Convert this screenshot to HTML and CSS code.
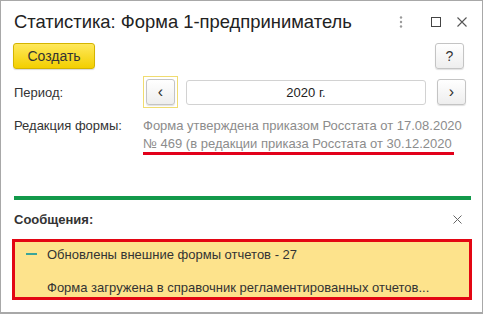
FILE: index.html
```html
<!DOCTYPE html>
<html>
<head>
    <meta charset="UTF-8">
    <title>Статистика: Форма 1-предприниматель</title>
    <link rel="stylesheet" href="styles.css">
</head>
<body>
    <div class="window">
        <div class="title-bar">
            <h1>Статистика: Форма 1-предприниматель</h1>
            <div class="window-tools">
                <span class="tool-dots">
                    <svg width="4" height="12" viewBox="0 0 4 12"><circle cx="2" cy="1.5" r="1.2" fill="#9a9a9a"/><circle cx="2" cy="6" r="1.2" fill="#9a9a9a"/><circle cx="2" cy="10.5" r="1.2" fill="#9a9a9a"/></svg>
                </span>
                <span class="tool-max">
                    <svg width="10" height="10" viewBox="0 0 10 10"><rect x="0.5" y="0.5" width="9" height="9" fill="none" stroke="#444" stroke-width="1"/></svg>
                </span>
                <span class="tool-close">
                    <svg width="10" height="10" viewBox="0 0 10 10"><path d="M0.5 0.5 L9.5 9.5 M9.5 0.5 L0.5 9.5" stroke="#555" stroke-width="1.1"/></svg>
                </span>
            </div>
        </div>

        <div class="toolbar">
            <button class="yellow-button">Создать</button>
            <button class="gray-button help-button">?</button>
        </div>

        <div class="form-row period-row">
            <div class="label">Период:</div>
            <div class="period-field">
                <span class="focus-frame"><button class="gray-button arrow-button">&lsaquo;</button></span>
                <div class="year-input">2020 г.</div>
                <button class="gray-button arrow-button">&rsaquo;</button>
            </div>
        </div>

        <div class="form-row edition-row">
            <div class="label">Редакция формы:</div>
            <div class="edition-text">
                Форма утверждена приказом Росстата от 17.08.2020<br>
                <span class="marked">№ 469 (в редакции приказа Росстата от 30.12.2020</span>
            </div>
        </div>

        <div class="green-line"></div>

        <div class="messages-head">
            <span class="messages-title">Сообщения:</span>
            <span class="messages-close">
                <svg width="9" height="9" viewBox="0 0 9 9"><path d="M0.5 0.5 L8.5 8.5 M8.5 0.5 L0.5 8.5" stroke="#666" stroke-width="1"/></svg>
            </span>
        </div>

        <div class="messages-box">
            <div class="message-line">
                <span class="message-dash"></span>
                <span>Обновлены внешние формы отчетов - 27</span>
            </div>
            <div class="message-line">
                <span class="message-dash empty"></span>
                <span>Форма загружена в справочник регламентированных отчетов...</span>
            </div>
        </div>
    </div>
</body>
</html>
```

FILE: styles.css
```css
body {
    margin: 0;
    background-color: #ffffff;
    font-family: "Liberation Sans", Arial, sans-serif;
    color: #333333;
}

.window {
    width: 483px;
    height: 314px;
    box-sizing: border-box;
    border: 1px solid #a8a8a8;
    border-bottom-width: 2px;
    background-color: #ffffff;
    padding: 0 12px;
}

.title-bar {
    display: flex;
    align-items: center;
    justify-content: space-between;
    height: 42px;
    padding-left: 1px;
}

h1 {
    margin: 0;
    font-size: 18.4px;
    font-weight: normal;
    color: #222222;
}

.window-tools {
    display: flex;
    align-items: center;
    padding-right: 3px;
}

.window-tools span {
    display: flex;
}

.tool-dots {
    margin-right: 28px;
}

.tool-max {
    margin-right: 16px;
}

.toolbar {
    display: flex;
    justify-content: space-between;
    align-items: center;
    padding-right: 6px;
}

button {
    font-family: "Liberation Sans", Arial, sans-serif;
    cursor: pointer;
}

.yellow-button {
    width: 82px;
    height: 26px;
    font-size: 14px;
    color: #333333;
    border: 1px solid #d4b400;
    border-radius: 3px;
    background: linear-gradient(#ffe85c, #f3cf00);
    box-shadow: 0 1px 1px rgba(0, 0, 0, 0.15);
}

.gray-button {
    height: 26px;
    width: 29px;
    padding: 0;
    font-size: 14px;
    color: #333333;
    border: 1px solid #c4c4c4;
    border-radius: 3px;
    background: linear-gradient(#ffffff, #eeeeee);
    box-shadow: 0 1px 1px rgba(0, 0, 0, 0.12);
}

.form-row {
    display: flex;
    align-items: flex-start;
    font-size: 13px;
}

.label {
    width: 129px;
    padding-left: 1px;
    color: #333333;
}

.period-row {
    margin-top: 7px;
    align-items: center;
}

.period-field {
    display: flex;
    align-items: center;
    gap: 8px;
}

.focus-frame {
    display: flex;
    padding: 2px;
    border: 1px solid #f0dc70;
}

.arrow-button {
    font-size: 16px;
    line-height: 20px;
}

.year-input {
    width: 238px;
    height: 23px;
    line-height: 23px;
    border: 1px solid #d2d2d2;
    border-radius: 3px;
    text-align: center;
    font-size: 13px;
    color: #222222;
    margin-right: 3px;
}

.edition-row {
    margin-top: 9px;
}

.edition-row .label {
    line-height: 18px;
}

.edition-text {
    color: #8c8c8c;
    line-height: 18px;
}

.marked {
    display: inline-block;
    border-bottom: 3px solid #e2001a;
    padding-right: 2px;
    line-height: 16px;
}

.green-line {
    height: 4px;
    margin-top: 41px;
    margin-left: 1px;
    width: 457px;
    background-color: #12994a;
}

.messages-head {
    display: flex;
    justify-content: space-between;
    align-items: center;
    height: 39px;
    padding-left: 1px;
    padding-right: 8px;
}

.messages-title {
    font-size: 13px;
    font-weight: bold;
    color: #333333;
}

.messages-close {
    display: flex;
}

.messages-box {
    width: 460px;
    box-sizing: border-box;
    margin-left: -1px;
    border: 3px solid #e30613;
    background-color: #fde38c;
    padding: 2px 0 0 11px;
    font-size: 13px;
    color: #333333;
}

.message-line {
    display: flex;
    align-items: center;
    height: 20px;
    margin-bottom: 13px;
}

.message-line:last-child {
    margin-bottom: 0;
}

.message-dash {
    width: 11px;
    height: 2px;
    background-color: #3aa59a;
    margin-right: 10px;
}

.message-dash.empty {
    background-color: transparent;
}
```
